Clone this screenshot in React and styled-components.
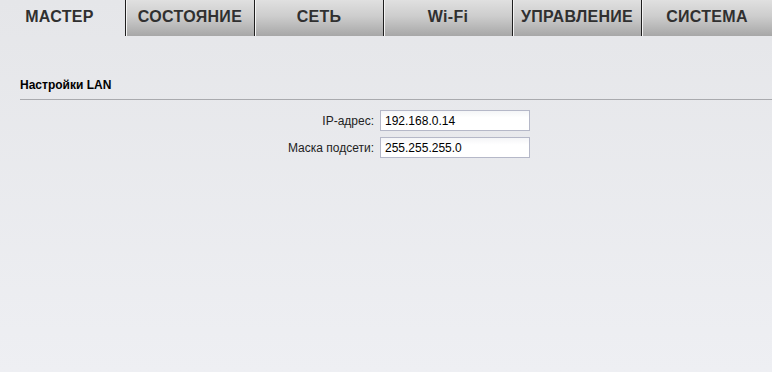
import React from "react";
import styled, { createGlobalStyle } from "styled-components";

const Global = createGlobalStyle`
  html, body { margin: 0; padding: 0; }
  body {
    width: 772px; height: 372px; overflow: hidden;
    font-family: "Liberation Sans", Arial, sans-serif;
    background: linear-gradient(to bottom, #e5e6e9 0%, #eeeff3 100%);
  }
`;

const Page = styled.div`
  width: 772px;
  height: 372px;
  display: flex;
  flex-direction: column;
`;

const TabBar = styled.nav`
  display: grid;
  grid-template-columns: 125px 129px 129px 129px 129px 131px;
  height: 36px;
`;

const Tab = styled.div`
  display: flex;
  align-items: center;
  justify-content: center;
  font-weight: bold;
  font-size: 16px;
  letter-spacing: 0.3px;
  color: #303030;
  box-sizing: border-box;
  padding-bottom: 2px;
  ${(p) =>
    p.$active
      ? `background: transparent; padding-right: 6px;`
      : `background: linear-gradient(to bottom, #e0e0e0 0%, #cdcdcd 45%, #a7a7a7 100%);
         border-left: 1px solid #1e1e1e;
         box-shadow: inset 1px 0 0 #f4f4f4;`}
`;

const Content = styled.main`
  padding: 42px 0 0 20px;
`;

const SectionTitle = styled.h2`
  margin: 0;
  font-size: 12px;
  font-weight: bold;
  color: #000;
  padding-bottom: 7px;
  border-bottom: 1px solid #a9aaae;
`;

const Form = styled.div`
  display: grid;
  grid-template-columns: 354px 150px;
  column-gap: 6px;
  row-gap: 6px;
  margin-top: 10px;
`;

const Label = styled.label`
  font-size: 12px;
  color: #222;
  text-align: right;
  align-self: center;
`;

const Input = styled.input`
  box-sizing: border-box;
  width: 150px;
  height: 21px;
  border: 1px solid #b5b8c8;
  background: linear-gradient(to bottom, #f4f5f7 0%, #ffffff 35%);
  font-family: "Liberation Sans", Arial, sans-serif;
  font-size: 12px;
  color: #000;
  padding: 1px 4px 0;
  outline: none;
`;

const tabs = ["МАСТЕР", "СОСТОЯНИЕ", "СЕТЬ", "Wi-Fi", "УПРАВЛЕНИЕ", "СИСТЕМА"];

export default function App() {
  return (
    <Page>
      <Global />
      <TabBar>
        {tabs.map((t, i) => (
          <Tab key={t} $active={i === 0}>{t}</Tab>
        ))}
      </TabBar>
      <Content>
        <SectionTitle>Настройки LAN</SectionTitle>
        <Form>
          <Label>IP-адрес:</Label>
          <Input defaultValue="192.168.0.14" />
          <Label>Маска подсети:</Label>
          <Input defaultValue="255.255.255.0" />
        </Form>
      </Content>
    </Page>
  );
}
